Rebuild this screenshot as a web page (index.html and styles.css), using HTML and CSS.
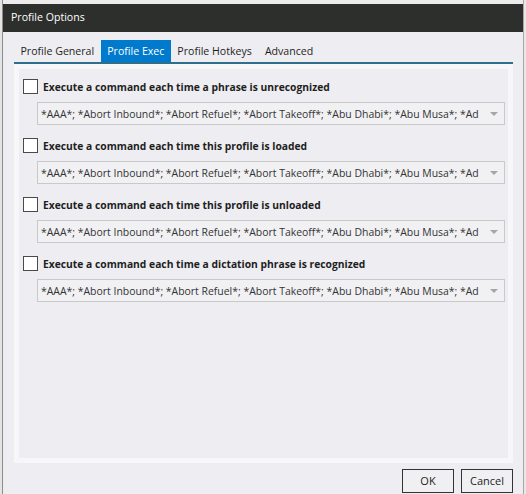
FILE: index.html
```html
<!DOCTYPE html>
<html>
<head>
<meta charset="utf-8">
<link rel="stylesheet" href="styles.css">
</head>
<body>
<div class="screen">
  <div class="edge-left"></div>
  <div class="dialog">
    <div class="titlebar">Profile Options</div>
    <div class="tabs">
      <div class="tab">Profile General</div>
      <div class="tab active">Profile Exec</div>
      <div class="tab">Profile Hotkeys</div>
      <div class="tab">Advanced</div>
    </div>
    <div class="panel">
      <div class="row">
        <div class="check-line"><span class="box"></span><span class="label">Execute a command each time a phrase is unrecognized</span></div>
        <div class="combo"><span class="combo-text">*AAA*; *Abort Inbound*; *Abort Refuel*; *Abort Takeoff*; *Abu Dhabi*; *Abu Musa*; *Ad</span><span class="arrow"></span></div>
      </div>
      <div class="row">
        <div class="check-line"><span class="box"></span><span class="label">Execute a command each time this profile is loaded</span></div>
        <div class="combo"><span class="combo-text">*AAA*; *Abort Inbound*; *Abort Refuel*; *Abort Takeoff*; *Abu Dhabi*; *Abu Musa*; *Ad</span><span class="arrow"></span></div>
      </div>
      <div class="row">
        <div class="check-line"><span class="box"></span><span class="label">Execute a command each time this profile is unloaded</span></div>
        <div class="combo"><span class="combo-text">*AAA*; *Abort Inbound*; *Abort Refuel*; *Abort Takeoff*; *Abu Dhabi*; *Abu Musa*; *Ad</span><span class="arrow"></span></div>
      </div>
      <div class="row">
        <div class="check-line"><span class="box"></span><span class="label">Execute a command each time a dictation phrase is recognized</span></div>
        <div class="combo"><span class="combo-text">*AAA*; *Abort Inbound*; *Abort Refuel*; *Abort Takeoff*; *Abu Dhabi*; *Abu Musa*; *Ad</span><span class="arrow"></span></div>
      </div>
    </div>
    <div class="buttons">
      <div class="btn">OK</div>
      <div class="btn">Cancel</div>
    </div>
  </div>
  <div class="edge-right"></div>
</div>
</body>
</html>
```
FILE: styles.css
```css
html, body {
  margin: 0;
  padding: 0;
}
body {
  width: 526px;
  height: 494px;
  overflow: hidden;
  background: #ececec;
  font-family: "Open Sans", "Noto Sans", sans-serif;
  color: #222;
}
.screen {
  display: flex;
  height: 494px;
}
.edge-left {
  width: 2px;
  background: #e4e4e4;
  border-right: 1px solid #8c8c8c;
  flex: none;
}
.edge-right {
  flex: 1;
  background: #e8e8e8;
  border-left: 1px solid #a8a8a8;
}
.dialog {
  width: 520px;
  flex: none;
  margin-top: 4px;
  background: #eeeef2;
  display: flex;
  flex-direction: column;
}
.titlebar {
  height: 28px;
  line-height: 27px;
  background: #2d2f2c;
  color: #ffffff;
  font-size: 10.6px;
  padding-left: 8px;
}
.tabs {
  display: flex;
  margin: 8px 10px 0 11px;
  height: 22px;
  border-bottom: 2px solid #2f6f8b;
}
.tab {
  font-size: 10.6px;
  line-height: 21px;
  padding: 1px 6.5px 0;
  color: #1e1e1e;
}
.tab.active {
  background: #007acc;
  color: #ffffff;
}
.panel {
  margin: 0 10px 0 11px;
  height: 379px;
  border: 5px solid #f7f7f9;
  background: #eeeef2;
  padding: 10px 3px 0 4px;
  display: flex;
  flex-direction: column;
  gap: 13px;
}
.row {
  display: flex;
  flex-direction: column;
  gap: 8px;
}
.check-line {
  display: flex;
  align-items: center;
  height: 15px;
}
.box {
  width: 13px;
  height: 13px;
  border: 1px solid #4a4a4a;
  background: #ffffff;
  flex: none;
}
.label {
  margin-left: 5px;
  font-size: 10.3px;
  font-weight: 700;
  color: #1e1e1e;
  white-space: nowrap;
}
.combo {
  margin-left: 14px;
  height: 21px;
  border: 1px solid #c9c9c9;
  background: #f1f1f3;
  display: flex;
  align-items: center;
  position: relative;
}
.combo-text {
  padding-left: 3px;
  font-size: 10.45px;
  color: #333;
  white-space: nowrap;
}
.arrow {
  position: absolute;
  right: 6px;
  top: 9px;
  width: 0;
  height: 0;
  border-left: 4px solid transparent;
  border-right: 4px solid transparent;
  border-top: 4px solid #a6a6a6;
}
.buttons {
  display: flex;
  justify-content: flex-end;
  gap: 7px;
  margin: 6px 10px 0 0;
}
.btn {
  width: 50px;
  height: 22px;
  border: 1px solid #333;
  background: #f0f0f2;
  font-size: 11px;
  line-height: 22px;
  text-align: center;
  color: #1e1e1e;
}
```
